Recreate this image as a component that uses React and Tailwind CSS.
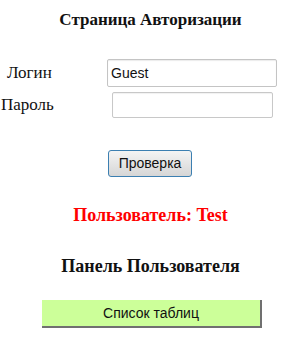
export default function App() {
  const serif = { fontFamily: '"Liberation Serif", "Times New Roman", serif' };
  return (
    <div className="w-[289px] h-[339px] bg-white relative overflow-hidden" style={serif}>
      <div className="flex flex-col">
        <div className="pl-[12px] pt-[10px] text-center font-bold text-[17px] leading-[20px] text-[#111]">
          Страница Авторизации
        </div>
        <div className="mt-[29px] flex items-center h-[28px]">
          <span className="ml-[7px] w-[100px] text-[17px] leading-[20px] text-[#111]">Логин</span>
          <div className="w-[170px] h-[28px] border border-[#c4c4c4] rounded-[2px] shadow-[inset_0_1px_1px_rgba(0,0,0,0.08)] flex items-center pl-[3px] text-[14px] text-[#111] font-['Liberation_Sans',Arial,sans-serif]">
            Guest
          </div>
        </div>
        <div className="mt-[5px] flex items-center h-[26px]">
          <span className="ml-[1px] w-[111px] text-[17px] leading-[20px] text-[#111]">Пароль</span>
          <div className="w-[161px] h-[26px] border border-[#c8c8c8] rounded-[2px] shadow-[inset_0_1px_1px_rgba(0,0,0,0.06)]"></div>
        </div>
        <div className="mt-[32px] flex pl-[108px]">
          <div className="w-[84px] h-[27px] border border-[#3c7fb1] rounded-[3px] bg-gradient-to-b from-[#f4f4f4] to-[#d6d6d6] flex items-center justify-center text-[14px] text-[#111] font-['Liberation_Sans',Arial,sans-serif]">
            Проверка
          </div>
        </div>
        <div className="mt-[27px] pl-[12px] text-center font-bold text-[18px] leading-[22px] text-[#ff0000]">
          Пользователь: Test
        </div>
        <div className="mt-[29px] pl-[12px] text-center font-bold text-[18px] leading-[22px] text-[#111]">
          Панель Пользователя
        </div>
        <div className="mt-[23px] flex pl-[42px]">
          <div className="w-[220px] h-[28px] bg-[#ccff99] border-r-2 border-b-2 border-[#707070] flex items-center justify-center text-[14px] text-[#111] font-['Liberation_Sans',Arial,sans-serif]">
            Список таблиц
          </div>
        </div>
      </div>
    </div>
  );
}
